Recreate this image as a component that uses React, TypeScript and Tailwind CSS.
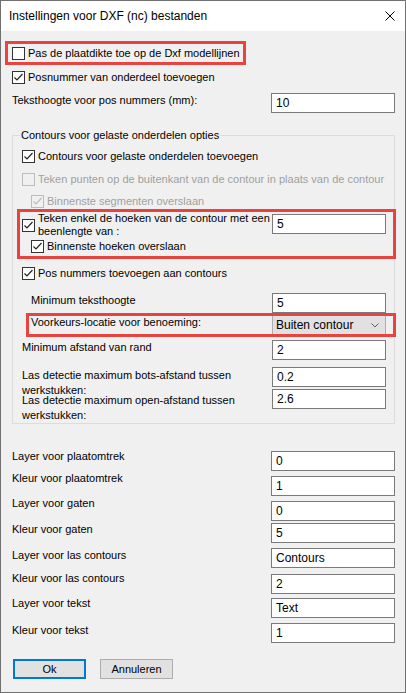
import type { ReactNode } from 'react'

function Box({ checked, disabled }: { checked?: boolean; disabled?: boolean }) {
  return (
    <span
      className={
        disabled
          ? 'flex h-[13px] w-[13px] shrink-0 items-center justify-center border border-[#bcbcbc] bg-[#f0f0f0]'
          : 'flex h-[13px] w-[13px] shrink-0 items-center justify-center border border-[#333333] bg-white'
      }
    >
      {checked && (
        <svg width="11" height="11" viewBox="0 0 11 11">
          <polyline
            points="1.5,5.5 4,8 9.5,2"
            fill="none"
            stroke={disabled ? '#bcbcbc' : '#222222'}
            strokeWidth="1.2"
          />
        </svg>
      )}
    </span>
  )
}

function Check({
  label,
  checked,
  disabled,
  className = '',
}: {
  label: string
  checked?: boolean
  disabled?: boolean
  className?: string
}) {
  return (
    <div className={`flex h-[15px] items-center gap-[3px] ${className}`}>
      <Box checked={checked} disabled={disabled} />
      <span className={`whitespace-nowrap leading-[15px] ${disabled ? 'text-[#a0a0a0]' : ''}`}>{label}</span>
    </div>
  )
}

function TextBox({ value, narrow }: { value: string; narrow?: boolean }) {
  return (
    <div
      className={`h-[20px] shrink-0 border border-[#7a7a7a] bg-white pl-[4px] text-[12px] leading-[18px] ${
        narrow ? 'w-[114px]' : 'w-[124px]'
      }`}
    >
      {value}
    </div>
  )
}

function Field({
  label,
  value,
  narrow,
  className = '',
  labelClass = '',
}: {
  label: ReactNode
  value: string
  narrow?: boolean
  className?: string
  labelClass?: string
}) {
  return (
    <div className={`flex h-[20px] items-start justify-between ${className}`}>
      <span className={`whitespace-nowrap leading-[15px] ${labelClass}`}>{label}</span>
      <TextBox value={value} narrow={narrow} />
    </div>
  )
}

export default function App() {
  return (
    <div className="h-[693px] w-[406px] overflow-hidden border border-[#707070] bg-[#f0f0f0] font-['Liberation_Sans',Arial,sans-serif] text-[11px] text-black">
      <div className="flex h-[30px] items-center justify-between bg-white pl-[8px] pr-[10px]">
        <span className="text-[12px] leading-[15px]">Instellingen voor DXF (nc) bestanden</span>
        <svg width="10" height="10" viewBox="0 0 10 10">
          <path d="M0.5 0.5 L9.5 9.5 M9.5 0.5 L0.5 9.5" stroke="#000" strokeWidth="1" />
        </svg>
      </div>

      <div className="flex flex-col pl-[11px] pr-[10px]">
        <div className="relative mt-[15px]">
          <Check label="Pas de plaatdikte toe op de Dxf modellijnen" />
          <div className="pointer-events-none absolute -left-[7px] -top-[5px] h-[24px] w-[241px] border-[3px] border-[#e8443f]" />
        </div>
        <Check className="mt-[9px]" label="Posnummer van onderdeel toevoegen" checked />
        <Field className="mt-[8px]" label="Teksthoogte voor pos nummers (mm):" value="10" />

        <div className="mt-[22px] border border-[#dcdcdc] pb-[14px]">
          <div className="-mt-[8px] ml-[7px] w-fit bg-[#f0f0f0] px-[1px] leading-[15px]">
            Contours voor gelaste onderdelen opties
          </div>
          <div className="flex flex-col pl-[9px] pr-[8px]">
            <Check className="mt-[6px]" label="Contours voor gelaste onderdelen toevoegen" checked />
            <Check
              className="mt-[8px]"
              label="Teken punten op de buitenkant van de contour in plaats van de contour"
              disabled
            />
            <Check className="ml-[9px] mt-[7px]" label="Binnenste segmenten overslaan" checked disabled />

            <div className="relative mt-[5px]">
              <div className="flex h-[20px] items-start justify-between">
                <div className="-mt-[2px] flex items-center gap-[3px]">
                  <Box checked />
                  <span className="whitespace-nowrap leading-[13px]">
                    Teken enkel de hoeken van de contour met een
                    <br />
                    beenlengte van :
                  </span>
                </div>
                <TextBox value="5" narrow />
              </div>
              <Check className="ml-[9px] mt-[5px]" label="Binnenste hoeken overslaan" checked />
              <div className="pointer-events-none absolute -left-[5px] -top-[5px] h-[50px] w-[379px] border-[3px] border-[#e8443f]" />
            </div>

            <Check className="mt-[12px]" label="Pos nummers toevoegen aan contours" checked />
            <Field className="mt-[12px]" labelClass="ml-[9px]" label="Minimum teksthoogte" value="5" narrow />

            <div className="relative mt-[2px] flex h-[20px] items-start justify-between">
              <span className="ml-[9px] whitespace-nowrap leading-[15px]">Voorkeurs-locatie voor benoeming:</span>
              <div className="flex h-[20px] w-[114px] items-center justify-between border border-[#adadad] bg-[#e1e1e1] pl-[3px] pr-[6px] text-[12px] leading-[18px]">
                <span>Buiten contour</span>
                <svg width="8" height="5" viewBox="0 0 8 5">
                  <polyline points="0.5,0.5 4,4 7.5,0.5" fill="none" stroke="#606060" strokeWidth="1" />
                </svg>
              </div>
              <div className="pointer-events-none absolute -top-[2px] left-[4px] h-[24px] w-[370px] border-[3px] border-[#e8443f]" />
            </div>

            <Field className="mt-[5px]" label="Minimum afstand van rand" value="2" narrow />
            <Field
              className="mt-[7px]"
              labelClass="mt-[1px] leading-[12px]"
              label={
                <>
                  Las detectie maximum bots-afstand tussen
                  <br />
                  werkstukken:
                </>
              }
              value="0.2"
              narrow
            />
            <Field
              className="mt-[2px]"
              labelClass="mt-[4px] leading-[12px]"
              label={
                <>
                  Las detectie maximum open-afstand tussen
                  <br />
                  werkstukken:
                </>
              }
              value="2.6"
              narrow
            />
          </div>
        </div>

        <Field className="mt-[27px]" labelClass="-mt-[2px]" label="Layer voor plaatomtrek" value="0" />
        <Field className="mt-[5px]" labelClass="-mt-[5px]" label="Kleur voor plaatomtrek" value="1" />
        <Field className="mt-[5px]" labelClass="-mt-[5px]" label="Layer voor gaten" value="0" />
        <Field className="mt-[2px]" labelClass="-mt-[1px]" label="Kleur voor gaten" value="5" />
        <Field className="mt-[5px]" label="Layer voor las contours" value="Contours" />
        <Field className="mt-[6px]" labelClass="-mt-[3px]" label="Kleur voor las contours" value="2" />
        <Field className="mt-[4px]" labelClass="-mt-[2px]" label="Layer voor tekst" value="Text" />
        <Field className="mt-[5px]" label="Kleur voor tekst" value="1" />

        <div className="ml-[1px] mt-[16px] flex gap-[14px]">
          <button className="h-[20px] w-[73px] border-2 border-[#0078d7] bg-[#e1e1e1] leading-[16px]">Ok</button>
          <button className="h-[20px] w-[73px] border border-[#adadad] bg-[#e1e1e1] leading-[18px]">Annuleren</button>
        </div>
      </div>
    </div>
  )
}
